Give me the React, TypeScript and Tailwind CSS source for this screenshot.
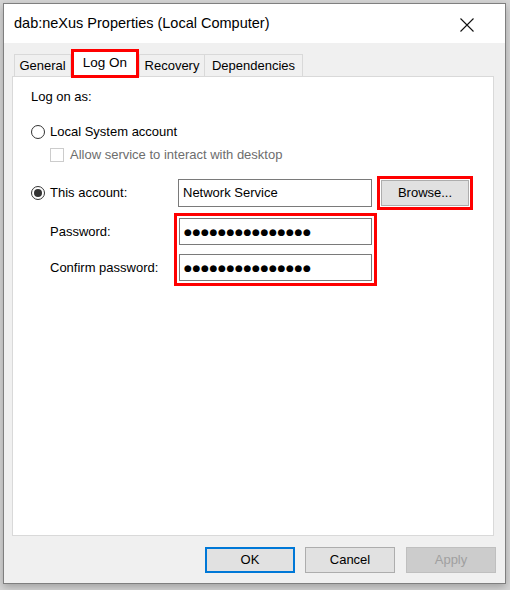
import React from 'react';

const font = "font-['Liberation_Sans',Arial,sans-serif]";

function Radio({ checked }: { checked?: boolean }) {
  return (
    <span className="flex h-[14px] w-[14px] shrink-0 items-center justify-center rounded-full border border-[#333333] bg-white">
      {checked && <span className="h-[8px] w-[8px] rounded-full bg-[#333333]" />}
    </span>
  );
}

function Tab({ label, className }: { label: string; className: string }) {
  return (
    <div className={`flex h-[22px] items-center justify-center border border-b-0 border-[#d9d9d9] bg-[#f0f0f0] pt-[1px] ${className}`}>
      {label}
    </div>
  );
}

function PasswordBox() {
  return (
    <div className="flex h-[27px] w-[193px] items-center border border-[#7a7a7a] bg-white pl-[4px]">
      <span className="font-['DejaVu_Sans',sans-serif] text-[9px] tracking-[0.65px]">●●●●●●●●●●●●●●●</span>
    </div>
  );
}

export default function App() {
  return (
    <div className={`h-[590px] w-[510px] overflow-hidden bg-[#d6d6d6] pl-[3px] pt-[3px] text-black ${font}`}>
      <div className="flex h-[581px] w-[503px] flex-col border border-[#7f7f7f] bg-[#f0f0f0] shadow-[0_3px_8px_rgba(0,0,0,0.25)]">
        {/* title bar */}
        <div className="flex h-[39px] items-center justify-between bg-white pl-[10px] pr-[31px]">
          <span className="text-[14.5px]">dab:neXus Properties (Local Computer)</span>
          <svg width="14" height="14" viewBox="0 0 14 14" className="mt-[2px]">
            <path d="M0.5 0.5 L13.5 13.5 M13.5 0.5 L0.5 13.5" stroke="#111" strokeWidth="1.1" fill="none" />
          </svg>
        </div>

        {/* body */}
        <div className="flex flex-1 flex-col pl-[8px] pt-[6px] text-[13px] leading-4">
          {/* tabs */}
          <div className="ml-[2px] flex items-end">
            <Tab label="General" className="w-[57px]" />
            <div className="relative z-10 -mb-[2px] flex h-[29px] w-[68px] items-center justify-center border-[3px] border-[#ff0000] bg-white pb-[1px] text-[13.5px]">
              Log On
            </div>
            <Tab label="Recovery" className="w-[66px]" />
            <Tab label="Dependencies" className="-ml-px w-[99px]" />
          </div>

          {/* panel */}
          <div className="flex h-[460px] w-[482px] flex-col border border-[#d9d9d9] bg-white pl-[18px] pt-[12px]">
            <div className="h-4">Log on as:</div>
            <div className="mt-[19px] flex h-4 items-center gap-[5px]">
              <Radio />
              <span>Local System account</span>
            </div>
            <div className="ml-[19px] mt-[8px] flex h-[14px] items-center gap-[6px] text-[#6d6d6d]">
              <span className="h-[14px] w-[14px] border border-[#cccccc] bg-white" />
              <span>Allow service to interact with desktop</span>
            </div>
            <div className="mt-[14px] flex items-center">
              <div className="flex w-[147px] items-center gap-[5px]">
                <Radio checked />
                <span>This account:</span>
              </div>
              <div className="flex h-[28px] w-[194px] items-center border border-[#7a7a7a] bg-white pl-[4px]">
                Network Service
              </div>
              <div className="ml-[5px] border-[3px] border-[#ff0000] p-px">
                <button className="flex h-[26px] w-[88px] items-center justify-center border border-[#adadad] bg-[#e1e1e1]">
                  Browse...
                </button>
              </div>
            </div>
            <div className="mt-[3px] flex">
              <div className="ml-[19px] flex w-[124px] flex-col gap-[9px] pt-[5px]">
                <div className="flex h-[27px] items-center">Password:</div>
                <div className="flex h-[27px] items-center">Confirm password:</div>
              </div>
              <div className="flex flex-col gap-[9px] border-[3px] border-[#ff0000] p-[2px]">
                <PasswordBox />
                <PasswordBox />
              </div>
            </div>
          </div>

          {/* buttons */}
          <div className="mt-[11px] flex justify-end gap-[10px] pr-[9px]">
            <button className="flex h-[26px] w-[90px] items-center justify-center border-2 border-[#0078d7] bg-[#e1e1e1]">
              OK
            </button>
            <button className="flex h-[26px] w-[90px] items-center justify-center border border-[#adadad] bg-[#e1e1e1]">
              Cancel
            </button>
            <button className="ml-px flex h-[26px] w-[90px] items-center justify-center border border-[#bfbfbf] bg-[#cccccc] text-[#a0a0a0]">
              Apply
            </button>
          </div>
        </div>
      </div>
    </div>
  );
}
